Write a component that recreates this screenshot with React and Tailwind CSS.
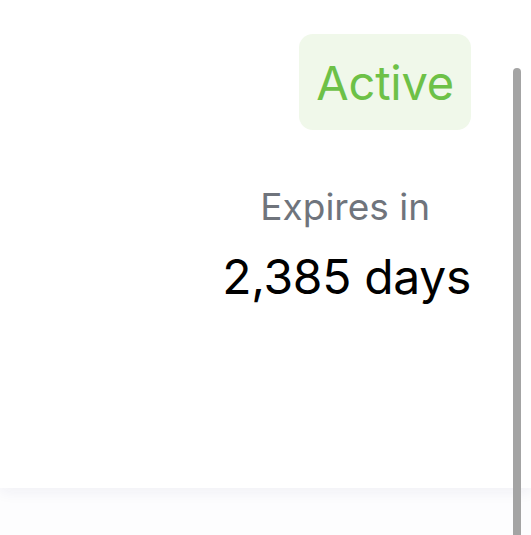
import React from "react";

export default function App() {
  return (
    <div className="relative w-[531px] h-[535px] overflow-hidden bg-[#fdfdfe]" style={{ fontFamily: "Inter, 'Noto Sans', sans-serif" }}>
      <div className="h-[488px] bg-white shadow-[0_4px_14px_rgba(30,40,100,0.06)] flex flex-col items-end pr-[60px] pt-[34px]">
        <div className="h-[96px] px-[17px] rounded-[14px] bg-[#f0f8ea] flex items-center">
          <span className="text-[47px] leading-none text-[#6dc147] tracking-[-0.2px]">Active</span>
        </div>
        <div className="mt-[55px] text-[37px] leading-[44px] text-[#6f747c] pr-[41px]">Expires in</div>
        <div className="mt-[20px] text-[48px] leading-[56px] text-black tracking-[-0.3px]">2,385 days</div>
      </div>
      <div className="absolute left-[513px] top-[68px] w-[8px] h-[480px] rounded-full bg-[#a4a4a4]" />
    </div>
  );
}
